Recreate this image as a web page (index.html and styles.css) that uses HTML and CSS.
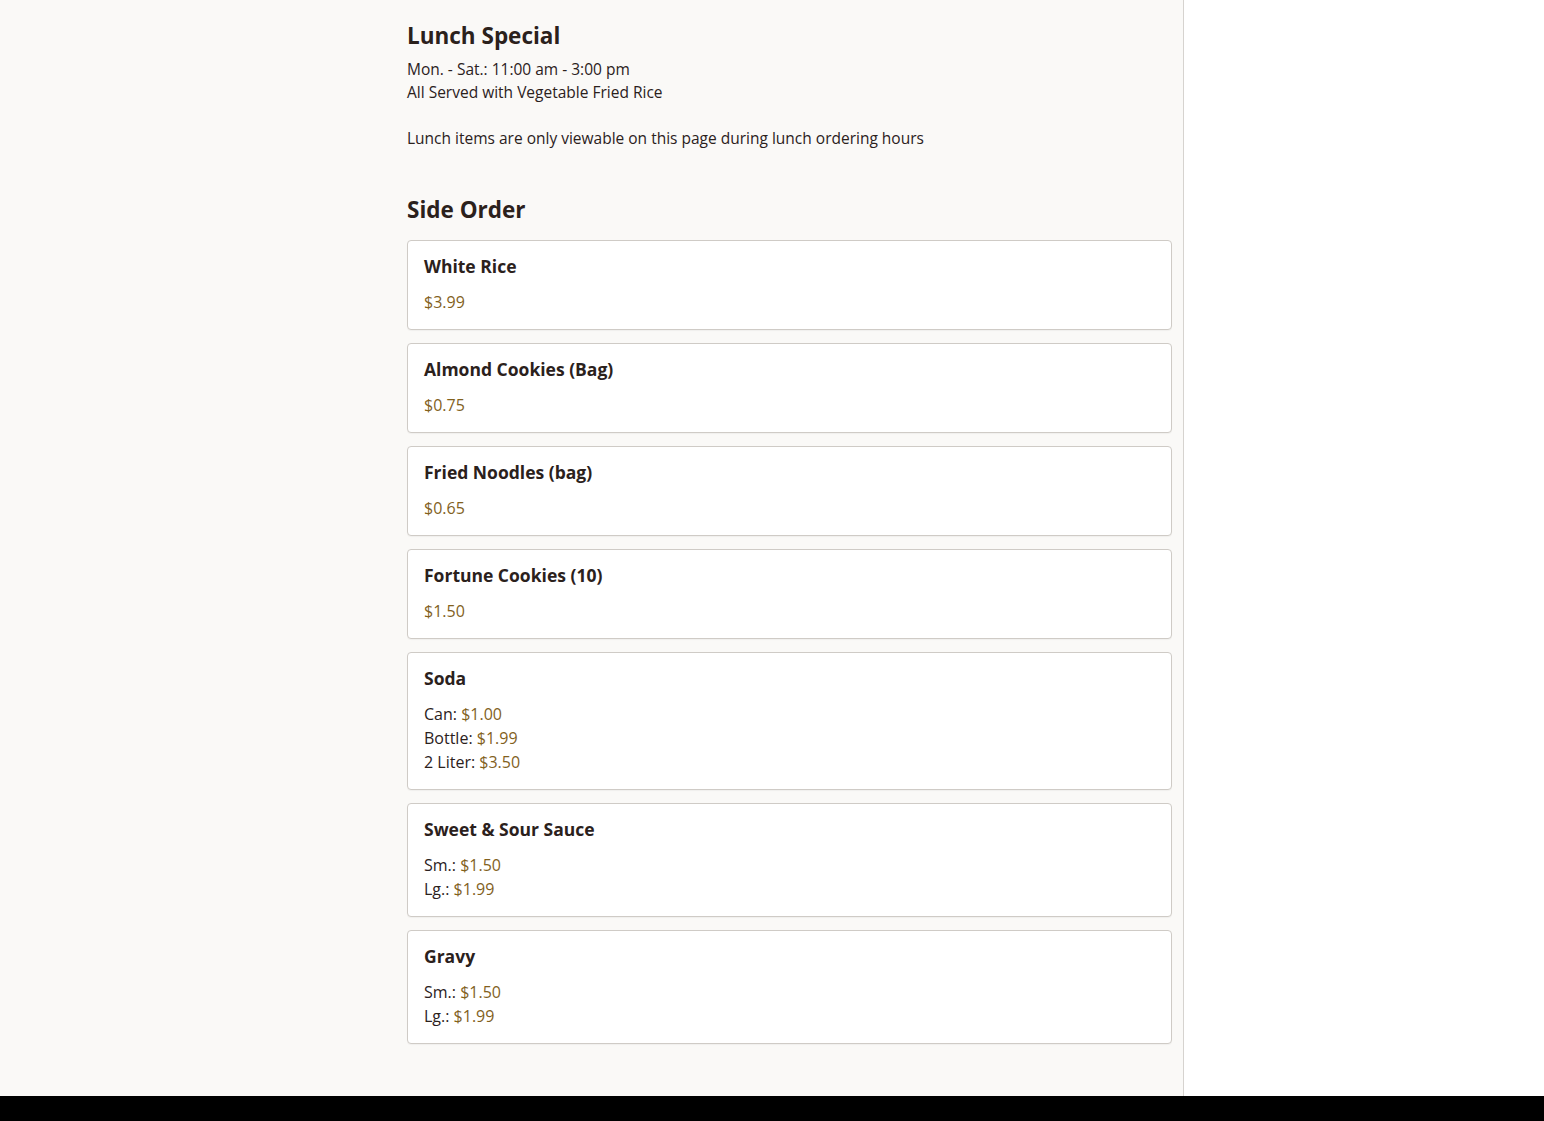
FILE: index.html
```html
<!DOCTYPE html>
<html lang="en">
<head>
<meta charset="utf-8">
<title>Lunch Special</title>
<link rel="stylesheet" href="styles.css">
</head>
<body>
<div class="page">
  <main class="main">
    <div class="content">
      <section class="intro">
        <h1 class="section-title">Lunch Special</h1>
        <p class="intro-text">Mon. - Sat.: 11:00 am - 3:00 pm<br>All Served with Vegetable Fried Rice</p>
        <p class="intro-text">Lunch items are only viewable on this page during lunch ordering hours</p>
      </section>
      <section class="category">
        <h2 class="section-title">Side Order</h2>
        <div class="items">
          <div class="item">
            <h3 class="item-name">White Rice</h3>
            <div class="item-prices"><span class="price">$3.99</span></div>
          </div>
          <div class="item">
            <h3 class="item-name">Almond Cookies (Bag)</h3>
            <div class="item-prices"><span class="price">$0.75</span></div>
          </div>
          <div class="item">
            <h3 class="item-name">Fried Noodles (bag)</h3>
            <div class="item-prices"><span class="price">$0.65</span></div>
          </div>
          <div class="item">
            <h3 class="item-name">Fortune Cookies (10)</h3>
            <div class="item-prices"><span class="price">$1.50</span></div>
          </div>
          <div class="item">
            <h3 class="item-name">Soda</h3>
            <div class="item-prices">
              <div>Can: <span class="price">$1.00</span></div>
              <div>Bottle: <span class="price">$1.99</span></div>
              <div>2 Liter: <span class="price">$3.50</span></div>
            </div>
          </div>
          <div class="item">
            <h3 class="item-name">Sweet &amp; Sour Sauce</h3>
            <div class="item-prices">
              <div>Sm.: <span class="price">$1.50</span></div>
              <div>Lg.: <span class="price">$1.99</span></div>
            </div>
          </div>
          <div class="item">
            <h3 class="item-name">Gravy</h3>
            <div class="item-prices">
              <div>Sm.: <span class="price">$1.50</span></div>
              <div>Lg.: <span class="price">$1.99</span></div>
            </div>
          </div>
        </div>
      </section>
    </div>
  </main>
  <aside class="sidebar"></aside>
</div>
<footer class="footer"></footer>
</body>
</html>
```

FILE: styles.css
```css
* { box-sizing: border-box; }
html, body { margin: 0; padding: 0; }
body {
  font-family: "Open Sans", "Noto Sans", sans-serif;
  color: #2b211c;
  background: #ffffff;
  font-size: 15.5px;
  line-height: 23px;
}
.page {
  display: flex;
  min-height: 1096px;
}
.main {
  width: 1184px;
  background: #faf9f7;
  border-right: 1px solid #d6d3cf;
}
.sidebar {
  flex: 1;
  background: #ffffff;
}
.content {
  margin-left: 407px;
  width: 765px;
  padding-top: 19px;
  padding-bottom: 52px;
}
.section-title {
  margin: 0;
  font-size: 22.5px;
  font-weight: 700;
  line-height: 34px;
}
.intro .section-title { margin-bottom: 5px; }
.intro-text {
  margin: 0 0 23px 0;
}
.intro { margin-bottom: 43px; }
.category .section-title { margin-bottom: 13px; }
.items {
  display: flex;
  flex-direction: column;
  gap: 13px;
}
.item {
  background: #ffffff;
  border: 1px solid #cfcbc6;
  border-radius: 4px;
  padding: 14px 16px 15px 16px;
  box-shadow: 0 1px 1px rgba(0,0,0,0.04);
}
.item-name {
  margin: 0 0 13px 0;
  font-size: 17.5px;
  font-weight: 700;
  line-height: 22px;
}
.item-prices {
  font-size: 16px;
  line-height: 24px;
}
.price {
  color: #82611d;
}
.footer {
  height: 25px;
  background: #000000;
}
```
